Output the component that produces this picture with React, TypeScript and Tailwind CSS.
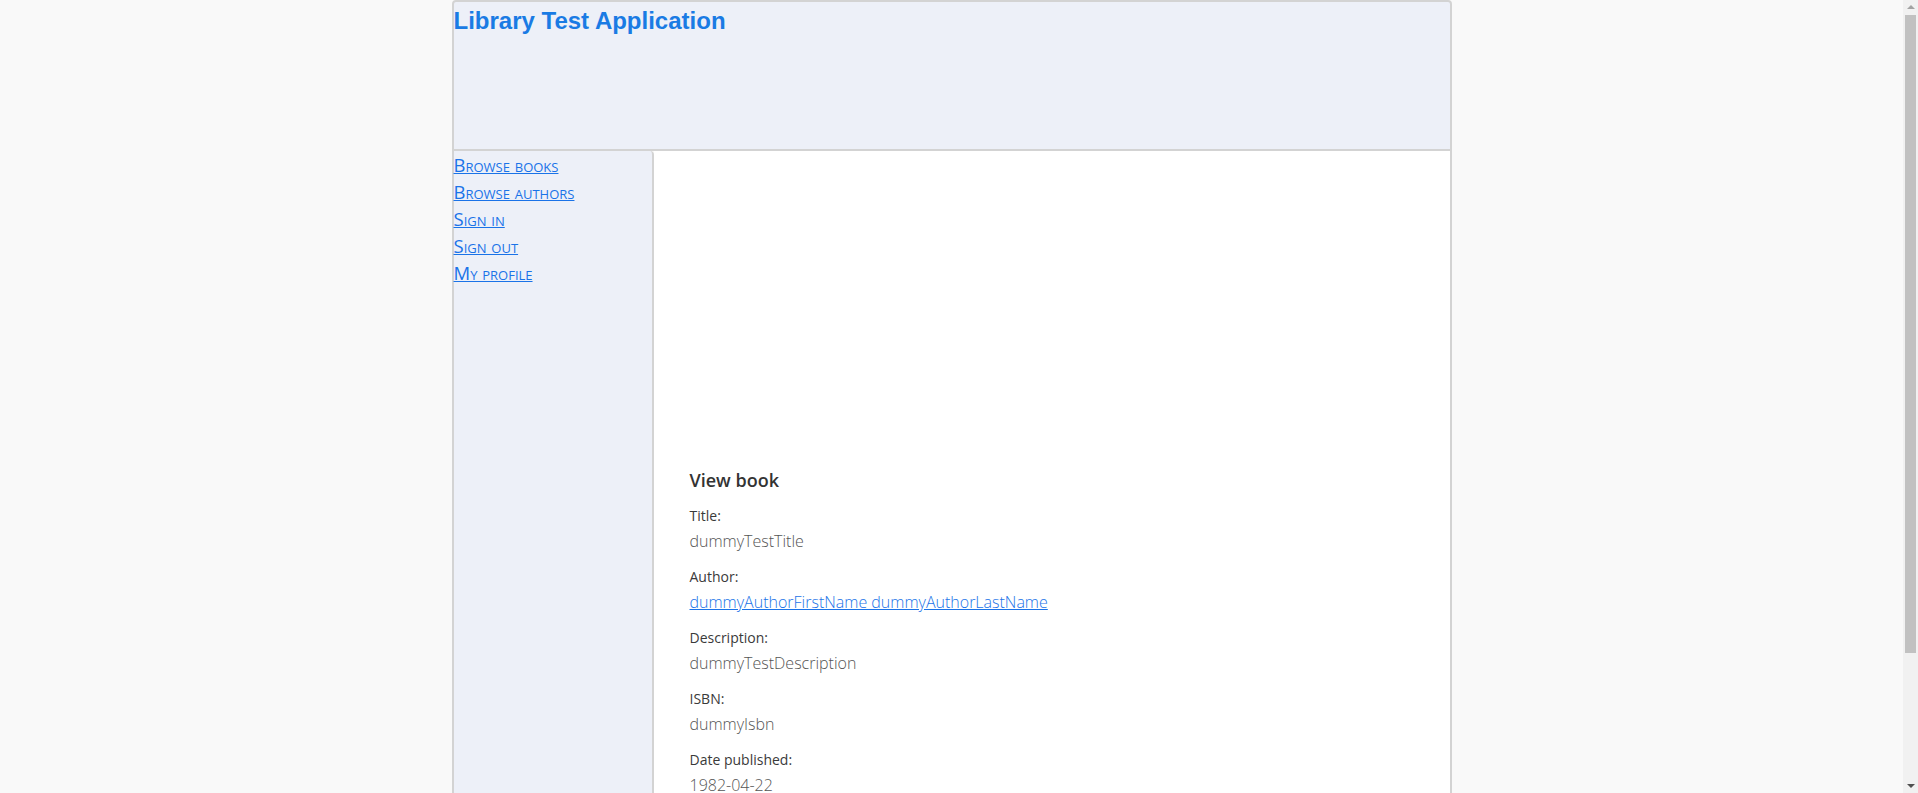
import React from 'react';

const navLinks = ['Browse books', 'Browse authors', 'Sign in', 'Sign out', 'My profile'];

const fields: { label: string; value: string; link?: boolean }[] = [
  { label: 'Title:', value: 'dummyTestTitle' },
  { label: 'Author:', value: 'dummyAuthorFirstName dummyAuthorLastName', link: true },
  { label: 'Description:', value: 'dummyTestDescription' },
  { label: 'ISBN:', value: 'dummyIsbn' },
  { label: 'Date published:', value: '1982-04-22' },
];

// stand-in for the browser's classic scrollbar seen in the screenshot
function Scrollbar() {
  return (
    <div className="fixed right-0 top-0 flex h-screen w-[15px] flex-col items-center bg-[#f1f1f1]">
      <div className="mt-[5px] h-0 w-0 border-x-[4px] border-b-[4px] border-x-transparent border-b-[#a3a3a3]" />
      <div className="mt-[6px] h-[638px] w-[11px] bg-[#c1c1c1]" />
      <div className="flex-1" />
      <div className="mb-[5px] h-0 w-0 border-x-[4px] border-t-[4px] border-x-transparent border-t-[#505050]" />
    </div>
  );
}

export default function App() {
  return (
    <div className="min-h-screen bg-[#f9f9f9] pr-[15px]">
      <div className="mx-auto w-[1000px]">
        <header className="h-[151px] rounded-t-[4px] border-2 border-[#d3d3d3] bg-[#edf0f8]">
          <h1
            className="pt-[5px] text-[24px] font-bold leading-[28px] text-[#1a7be4]"
            style={{ fontFamily: '"Liberation Sans", Arial, sans-serif' }}
          >
            Library Test Application
          </h1>
        </header>

        <div className="flex min-h-[797px]">
          <nav
            className="w-[202px] rounded-tr-[4px] border-x-2 border-[#d3d3d3] bg-[#edf0f8]"
            style={{ fontFamily: '"Open Sans", sans-serif' }}
          >
            {navLinks.map((link) => (
              <a
                key={link}
                href="#"
                className="block text-[18.5px] leading-[27px] text-[#1a73e8] underline [font-variant:small-caps]"
              >
                {link}
              </a>
            ))}
          </nav>

          <main
            className="flex-1 border-r-2 border-[#d3d3d3] bg-white pl-[36px] pt-[316px]"
            style={{ fontFamily: '"Open Sans", sans-serif' }}
          >
            <h2 className="mb-[10px] text-[18px] font-semibold leading-[27px] text-[#333]">View book</h2>
            {fields.map((f) => (
              <div key={f.label} className="mb-[11px]">
                <div className="text-[14px] leading-[24px] text-[#3a3a3a]">{f.label}</div>
                {f.link ? (
                  <a href="#" className="block text-[16px] font-light leading-[26px] text-[#1a73e8] underline">
                    {f.value}
                  </a>
                ) : (
                  <div className="text-[16px] font-light leading-[26px] text-[#555]">{f.value}</div>
                )}
              </div>
            ))}
          </main>
        </div>
      </div>
      <Scrollbar />
    </div>
  );
}
